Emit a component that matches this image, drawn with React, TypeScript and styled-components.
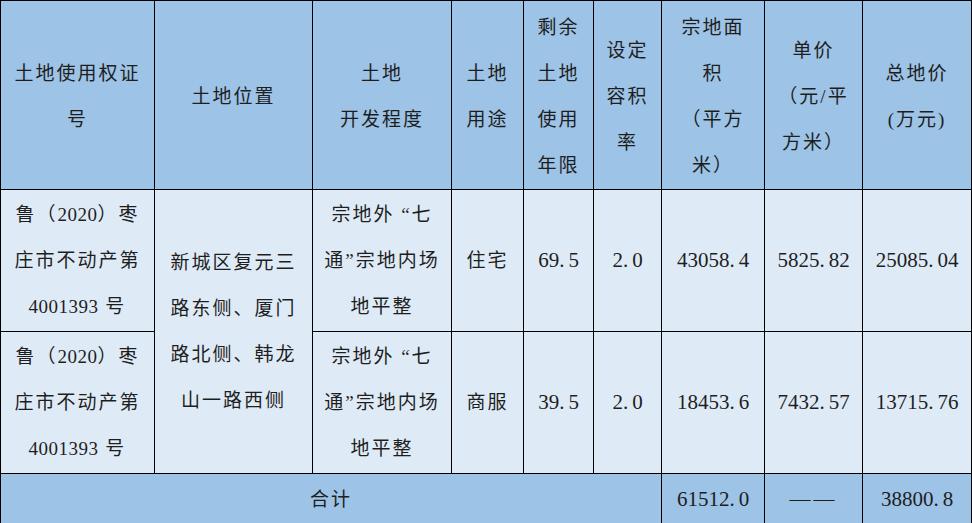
import React from 'react';
import styled, { createGlobalStyle } from 'styled-components';

const GlobalStyle = createGlobalStyle`
  html, body {
    margin: 0;
    padding: 0;
    overflow: hidden;
    background: #ffffff;
  }
`;

const Table = styled.table`
  border-collapse: collapse;
  table-layout: fixed;
  width: 971px;
  color: #1e1e1e;
  font-family: 'Liberation Serif', 'Noto Sans CJK SC', serif;
  font-size: 19px;
  letter-spacing: 2px;
  line-height: 46px;
`;

const Col = styled.col<{ $w: number }>`
  width: ${(p) => p.$w}px;
`;

const Row = styled.tr<{ $h: number }>`
  height: ${(p) => p.$h}px;
`;

const Cell = styled.td<{ $tone: 'head' | 'body' }>`
  padding: 0;
  border: 1px solid #000;
  text-align: center;
  vertical-align: middle;
  background: ${(p) => (p.$tone === 'head' ? '#9dc3e6' : '#deebf7')};
`;

const HeadCell = styled(Cell).attrs({ as: 'th', $tone: 'head' as const })`
  font-weight: normal;
  padding-top: 4px;
`;

const Num = styled.span`
  font-size: 21px;
  letter-spacing: 0;
`;

const Dot = styled.span`
  padding-right: 4px;
`;

const Digits = styled.span`
  letter-spacing: 0.5px;
`;

const Dashes = styled.span`
  font-size: 21px;
  letter-spacing: 3px;
`;

const headers: string[][] = [
  ['土地使用权证', '号'],
  ['土地位置'],
  ['土地', '开发程度'],
  ['土地', '用途'],
  ['剩余', '土地', '使用', '年限'],
  ['设定', '容积', '率'],
  ['宗地面', '积', '（平方', '米）'],
  ['单价', '（元/平', '方米）'],
  ['总地价', '(万元)'],
];

const widths = [154, 158, 139, 72, 70, 68, 103, 98, 109];

type Parcel = {
  use: string;
  years: string;
  ratio: string;
  area: string;
  price: string;
  total: string;
};

const parcels: Parcel[] = [
  { use: '住宅', years: '69.5', ratio: '2.0', area: '43058.4', price: '5825.82', total: '25085.04' },
  { use: '商服', years: '39.5', ratio: '2.0', area: '18453.6', price: '7432.57', total: '13715.76' },
];

const devLines = ['宗地外 “七', '通”宗地内场', '地平整'];
const placeLines = ['新城区复元三', '路东侧、厦门', '路北侧、韩龙', '山一路西侧'];

function Lines({ items }: { items: string[] }) {
  return (
    <>
      {items.map((t, i) => (
        <React.Fragment key={i}>
          {i > 0 && <br />}
          {t}
        </React.Fragment>
      ))}
    </>
  );
}

function Decimal({ value }: { value: string }) {
  const [whole, frac] = value.split('.');
  return (
    <Num>
      {whole}
      {frac !== undefined && (
        <>
          <Dot>.</Dot>
          {frac}
        </>
      )}
    </Num>
  );
}

function CertNo() {
  return (
    <>
      鲁（<Digits>2020</Digits>）枣
      <br />
      庄市不动产第
      <br />
      <Digits>4001393</Digits> 号
    </>
  );
}

export default function App() {
  return (
    <>
      <GlobalStyle />
      <Table>
        <colgroup>
          {widths.map((w, i) => (
            <Col key={i} $w={w} />
          ))}
        </colgroup>
        <thead>
          <Row $h={188}>
            {headers.map((h, i) => (
              <HeadCell key={i}>
                <Lines items={h} />
              </HeadCell>
            ))}
          </Row>
        </thead>
        <tbody>
          {parcels.map((p, i) => (
            <Row key={i} $h={142}>
              <Cell $tone="body">
                <CertNo />
              </Cell>
              {i === 0 && (
                <Cell $tone="body" rowSpan={2}>
                  <Lines items={placeLines} />
                </Cell>
              )}
              <Cell $tone="body">
                <Lines items={devLines} />
              </Cell>
              <Cell $tone="body">{p.use}</Cell>
              <Cell $tone="body">
                <Decimal value={p.years} />
              </Cell>
              <Cell $tone="body">
                <Decimal value={p.ratio} />
              </Cell>
              <Cell $tone="body">
                <Decimal value={p.area} />
              </Cell>
              <Cell $tone="body">
                <Decimal value={p.price} />
              </Cell>
              <Cell $tone="body">
                <Decimal value={p.total} />
              </Cell>
            </Row>
          ))}
          <Row $h={52}>
            <Cell $tone="head" colSpan={6}>
              合计
            </Cell>
            <Cell $tone="head">
              <Decimal value="61512.0" />
            </Cell>
            <Cell $tone="head">
              <Dashes>——</Dashes>
            </Cell>
            <Cell $tone="head">
              <Decimal value="38800.8" />
            </Cell>
          </Row>
        </tbody>
      </Table>
    </>
  );
}
